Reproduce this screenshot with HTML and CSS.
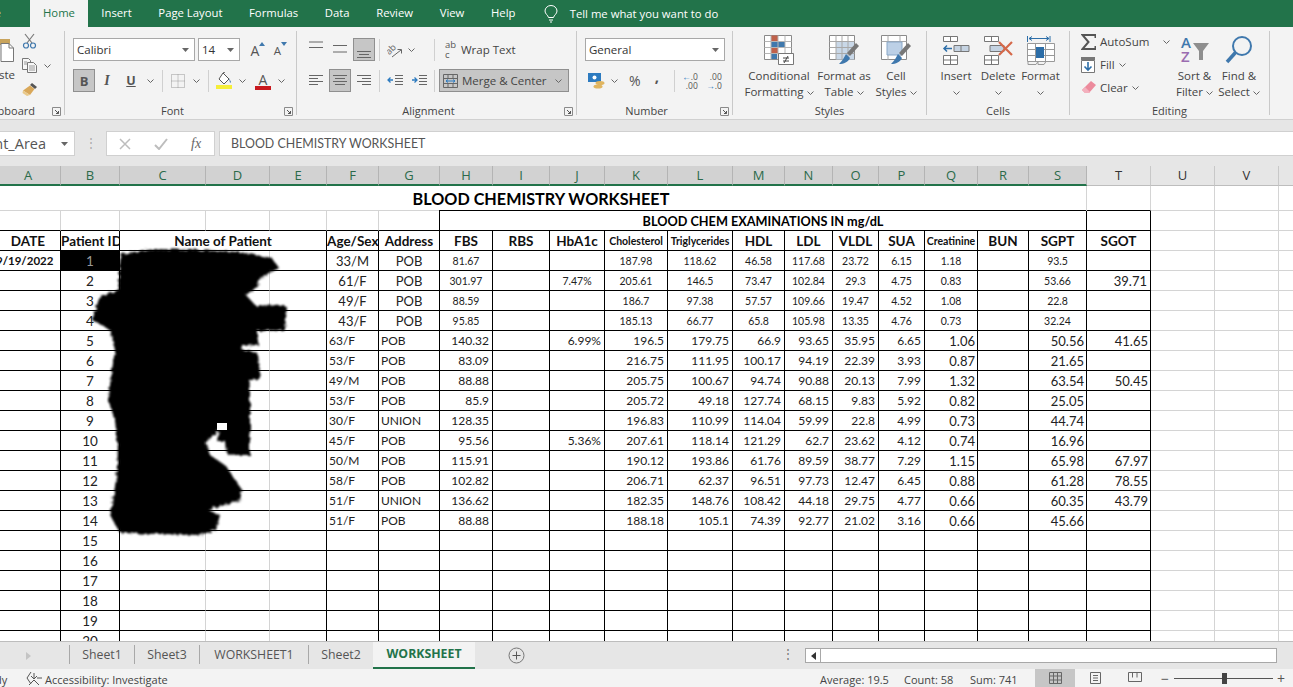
FILE: index.html
```html
<!DOCTYPE html>
<html lang="en">
<head>
<meta charset="utf-8">
<title>BLOOD CHEMISTRY WORKSHEET</title>
<link rel="stylesheet" href="styles.css">
</head>
<body>
<svg class="defs" width="0" height="0">
  <symbol id="chev" viewBox="0 0 7 4"><path d="M.5.5l3 3 3-3" fill="none" stroke="#666"/></symbol>
  <symbol id="tri" viewBox="0 0 7 4"><path d="M0 0h7L3.5 4z" fill="#666"/></symbol>
  <symbol id="launch" viewBox="0 0 9 9"><path d="M.5 8V.5H8.500V8.500H.5" fill="none" stroke="#8a8a8a"/><path d="M3 3l3.500 3.500M6.500 4v2.500H4" fill="none" stroke="#555"/></symbol>
</svg>

<nav class="menu">
  <span class="mtab file">File</span>
  <span class="mtab on">Home</span>
  <span class="mtab">Insert</span>
  <span class="mtab">Page Layout</span>
  <span class="mtab">Formulas</span>
  <span class="mtab">Data</span>
  <span class="mtab">Review</span>
  <span class="mtab">View</span>
  <span class="mtab">Help</span>
  <svg class="bulb" width="14" height="18" viewBox="0 0 14 18"><path d="M4.500 12.500C4 10 1 9 1 6a6 5.500 0 0 1 12 0c0 3-3 4-3.500 6.500zM5 15h4M6 17h2" fill="none" stroke="#fff"/></svg>
  <span class="tell">Tell me what you want to do</span>
</nav>

<section class="ribbon">
  <div class="group g-clip">
    <div class="clipbody">
      <div class="paste">
        <svg width="15" height="27" viewBox="0 0 15 27"><path d="M-6 3h16v6H-6z" fill="#c9a45c"/><path d="M1 7.500h8l4.500 4.500v13.500H1z" fill="#fff" stroke="#777"/><path d="M9 7.500V12h4.500" fill="none" stroke="#777"/></svg>
        <span class="pastetext">Paste</span>
      </div>
      <div class="clipstack">
        <svg width="15" height="16" viewBox="0 0 15 16"><path d="M3 1l7 9M12 1L5 10" stroke="#7a7a7a" fill="none" stroke-width="1.200"/><circle cx="4" cy="12.500" r="2.500" fill="none" stroke="#3f78ad" stroke-width="1.200"/><circle cx="11" cy="12.500" r="2.500" fill="none" stroke="#3f78ad" stroke-width="1.200"/></svg>
        <div class="copyrow">
          <svg width="15" height="15" viewBox="0 0 15 15"><path d="M.5.500h6l2 2v9H.5z" fill="#f7f7f7" stroke="#777"/><path d="M5.500 4.500h6l3 3v7h-9z" fill="#f7f7f7" stroke="#777"/><path d="M7 8h6M7 10h6M7 12h6M2 4h3M2 6h3" stroke="#999"/></svg>
          <svg class="chev c-copy"><use href="#chev"/></svg>
        </div>
        <svg width="16" height="15" viewBox="0 0 16 15"><path d="M10 1l5 4-2 2-5-4z" fill="#555"/><path d="M8 3.500l4.500 3.500L8 13 1 8.500z" fill="#d9a85a"/><path d="M1 8.500L8 13 5 14 .5 11z" fill="#e9c98a"/></svg>
      </div>
    </div>
    <div class="glabel"><span class="gname clipname">Clipboard</span><svg class="launch"><use href="#launch"/></svg></div>
  </div>

  <div class="group g-font">
    <div class="rows">
      <div class="row r1">
        <div class="field ml8 w122"><span>Calibri</span><svg class="chev tri"><use href="#tri"/></svg></div>
        <div class="field ml3 w42"><span>14</span><svg class="chev tri"><use href="#tri"/></svg></div>
        <div class="tb ml8 w20 growa"><span class="a-big">A</span><svg width="6" height="4" viewBox="0 0 6 4"><path d="M0 4l3-4 3 4z" fill="#3f78ad"/></svg></div>
        <div class="tb ml5 w15 growa"><span class="a-small">A</span><svg width="6" height="4" viewBox="0 0 6 4"><path d="M0 0l3 4 3-4z" fill="#3f78ad"/></svg></div>
      </div>
      <div class="row r2">
        <div class="tb w22 active bold ml8">B</div>
        <div class="tb w24 ital">I</div>
        <div class="tb w24 und">U</div>
        <div class="tb w14"><svg class="chev"><use href="#chev"/></svg></div>
        <i class="sep ml5"></i>
        <div class="tb w29"><svg width="14" height="14" viewBox="0 0 14 14"><path d="M.5.500h13v13H.5zM7 .5v13M.5 7h13" fill="none" stroke="#999" stroke-dasharray="1 1"/></svg></div>
        <div class="tb w8"><svg class="chev"><use href="#chev"/></svg></div>
        <i class="sep ml8"></i>
        <div class="tb w30"><svg width="17" height="17" viewBox="0 0 17 17"><path d="M7 1l6 6-5 5-5-5z" fill="#fff" stroke="#555"/><path d="M13 6l2 4-1 1z" fill="#3f78ad"/><path d="M7 1l2-1" stroke="#555"/><path d="M0 13h16v4H0z" fill="#f5ee3a"/></svg></div>
        <div class="tb w6"><svg class="chev"><use href="#chev"/></svg></div>
        <div class="tb ml4 w28 fcolor"><span>A</span><i></i></div>
        <div class="tb w8"><svg class="chev"><use href="#chev"/></svg></div>
      </div>
    </div>
    <div class="glabel"><span class="gname">Font</span><svg class="launch"><use href="#launch"/></svg></div>
  </div>

  <div class="group g-align">
    <div class="rows">
      <div class="row r1">
        <div class="tb ml12 w14"><svg width="14" height="20" viewBox="0 0 14 20"><path d="M0 2h14M0 7.500h14" stroke="#666"/></svg></div>
        <div class="tb ml10 w14"><svg width="14" height="20" viewBox="0 0 14 20"><path d="M0 5h14M0 11.500h14" stroke="#666" transform="translate(0 .5)"/></svg></div>
        <div class="tb ml6 w22 active"><svg width="14" height="20" viewBox="0 0 14 20"><path d="M0 11.500h14M2 14.500h10M0 17.500h14" stroke="#666"/></svg></div>
        <i class="sep ml4"></i>
        <div class="tb ml7 w16"><svg width="16" height="16" viewBox="0 0 16 16"><text x="0" y="10" class="orient" transform="rotate(-45 5 9)">ab</text><path d="M5 15l9-7M10.500 7.500H14.500V11.500" stroke="#666" fill="none"/></svg></div>
        <div class="tb w16"><svg class="chev"><use href="#chev"/></svg></div>
        <i class="sep ml15"></i>
        <div class="tb ml9 w13"><span class="abc">ab<br>c</span></div>
        <span class="btext ml4">Wrap Text</span>
      </div>
      <div class="row r2">
        <div class="tb ml12 w14"><svg width="14" height="12" viewBox="0 0 14 12"><path d="M0 .5h14M0 3.500h9M0 6.500h14M0 9.500h9" stroke="#666"/></svg></div>
        <div class="tb ml6 w22 active"><svg width="14" height="12" viewBox="0 0 14 12"><path d="M0 .5h14M2 3.500h10M0 6.500h14M2 9.500h10" stroke="#666"/></svg></div>
        <div class="tb ml6 w14"><svg width="14" height="12" viewBox="0 0 14 12"><path d="M0 .5h14M5 3.500h9M0 6.500h14M5 9.500h9" stroke="#666"/></svg></div>
        <i class="sep ml8"></i>
        <div class="tb ml7 w16"><svg width="16" height="12" viewBox="0 0 16 12"><path d="M8 .5h8M8 3.500h8M8 6.500h8M8 9.500h8" stroke="#666"/><path d="M6 5H1M3.500 2.500L1 5l2.500 2.500" fill="none" stroke="#2d7bc0" stroke-width="1.300"/></svg></div>
        <div class="tb ml8 w16"><svg width="16" height="12" viewBox="0 0 16 12"><path d="M8 .5h8M8 3.500h8M8 6.500h8M8 9.500h8" stroke="#666"/><path d="M1 5h5M3.500 2.500L6 5 3.500 7.500" fill="none" stroke="#2d7bc0" stroke-width="1.300"/></svg></div>
        <i class="sep ml7"></i>
        <div class="merge ml4 active">
          <svg width="15" height="14" viewBox="0 0 15 14"><path d="M.5.500h14v13H.5zM.5 4.500h14M.5 9.500h14M5 .5v4M10 .5v4M5 9.500v4M10 9.500v4" fill="none" stroke="#666"/><path d="M3 7h9M5 5.500L3 7l2 1.500M10 5.500L12 7l-2 1.500" fill="none" stroke="#2d7bc0"/></svg>
          <span class="btext">Merge &amp; Center</span>
          <svg class="chev"><use href="#chev"/></svg>
        </div>
      </div>
    </div>
    <div class="glabel"><span class="gname">Alignment</span><svg class="launch"><use href="#launch"/></svg></div>
  </div>

  <div class="group g-num">
    <div class="rows">
      <div class="row r1">
        <div class="field ml8 w140"><span>General</span><svg class="chev tri"><use href="#tri"/></svg></div>
      </div>
      <div class="row r2">
        <div class="tb ml11 w17"><svg width="17" height="16" viewBox="0 0 17 16"><path d="M0 0h13v9H0z" fill="#2d7bc0"/><circle cx="6.500" cy="4.500" r="2" fill="#fff"/><ellipse cx="12" cy="10" rx="4.500" ry="2" fill="#e0b560"/><ellipse cx="10" cy="13.500" rx="4.500" ry="2" fill="#e0b560"/></svg></div>
        <div class="tb w18"><svg class="chev"><use href="#chev"/></svg></div>
        <span class="pct ml6">%</span>
        <span class="comma ml10">,</span>
        <i class="sep ml12"></i>
        <div class="tb ml7 w16 dec"><span><b class="decarrow">←</b>.0<br>.00</span></div>
        <div class="tb ml8 w16 dec"><span>.00<br><b class="decarrow">→</b>.0</span></div>
      </div>
    </div>
    <div class="glabel"><span class="gname">Number</span><svg class="launch"><use href="#launch"/></svg></div>
  </div>

  <div class="group g-styles">
    <div class="bigrow">
      <div class="big ml13 w66">
        <svg width="30" height="30" viewBox="0 0 30 30"><path d="M.5.500h27v24H.5z" fill="#fff" stroke="#8a8a8a"/><path d="M7 .5h7v6H7zM7 12h7v6H7z" fill="#c0614a"/><path d="M7 7h14v5H7zM7 18h6v6H7z" fill="#3f78ad"/><path d="M7 .5v24M14 .5v24M21 .5v24M.5 6.500h27M.5 12.500h27M.5 18.500h27" stroke="#b5b5b5" fill="none"/><path d="M14.500 18.500h15v11h-15z" fill="#fff" stroke="#777"/><path d="M19 23h6M19 26h6M24 21l-4 7" stroke="#444" fill="none"/></svg>
        <span>Conditional<br>Formatting <svg class="chev"><use href="#chev"/></svg></span>
      </div>
      <div class="big ml6 w52">
        <svg width="30" height="30" viewBox="0 0 30 30"><path d="M.5.500h25v24H.5z" fill="#fff" stroke="#8a8a8a"/><path d="M7 6.500h18v18H7z" fill="#c9d8e8"/><path d="M.5 6.500h25M.5 12.500h25M.5 18.500h25M7 .5v24M13 .5v24M19 .5v24" stroke="#a8a8a8" fill="none"/><path d="M27 8l3 3-9 10-3-3z" fill="#777"/><path d="M17 19l4 4c-2 4-6 6-11 6 3-3 5-6 7-10z" fill="#3f78ad"/></svg>
        <span>Format as<br>Table <svg class="chev"><use href="#chev"/></svg></span>
      </div>
      <div class="big ml5 w42">
        <svg width="30" height="30" viewBox="0 0 30 30"><path d="M.5.500h25v24H.5z" fill="#fff" stroke="#8a8a8a"/><path d="M.5 6.500h25M7 .5v6M19 .5v6M7 20v5M19 20v5" stroke="#a8a8a8" fill="none"/><path d="M6 7h15v13H6z" fill="#bcd0e6" stroke="#8aa8c8"/><path d="M27 8l3 3-9 10-3-3z" fill="#777"/><path d="M17 19l4 4c-2 4-6 6-11 6 3-3 5-6 7-10z" fill="#3f78ad"/></svg>
        <span>Cell<br>Styles <svg class="chev"><use href="#chev"/></svg></span>
      </div>
    </div>
    <div class="glabel"><span class="gname full">Styles</span></div>
  </div>

  <div class="group g-cells">
    <div class="bigrow">
      <div class="big ml14 w30">
        <svg width="28" height="30" viewBox="0 0 28 30"><path d="M1.500 1.500h14v5h-14zM8.500 1.500v5M1.500 20.500h14v9h-14zM8.500 20.500v9M1.500 25h14" fill="#fff" stroke="#777"/><path d="M12 10.500h15v6H12zM19 10.500v6" fill="#c5d3e2" stroke="#777"/><path d="M10 13.500H2M5 10.500l-3 3 3 3" fill="none" stroke="#2d6ea8" stroke-width="1.500"/></svg>
        <span>Insert<br><svg class="chev"><use href="#chev"/></svg></span>
      </div>
      <div class="big ml10 w34">
        <svg width="31" height="30" viewBox="0 0 31 30"><path d="M1.500 1.500h14v5h-14zM8.500 1.500v5M1.500 20.500h14v9h-14zM8.500 20.500v9M1.500 25h14" fill="#fff" stroke="#777"/><path d="M7 10.500h14v6H7z" fill="#c5d3e2" stroke="#777"/><path d="M16 7l13 13M29 7L16 20" stroke="#d5694a" stroke-width="2.200"/></svg>
        <span>Delete<br><svg class="chev"><use href="#chev"/></svg></span>
      </div>
      <div class="big ml6 w39">
        <svg width="28" height="30" viewBox="0 0 28 30"><path d="M.5 1v6M23 1v6M2 3.500h20M5 1.500L2 3.500l3 2M19 1.500l3 2-3 2" fill="none" stroke="#2d6ea8"/><path d="M.5 8.500h27v18H.5zM.5 14.500h27M.5 20.500h27M8.500 8.500v18M18.500 8.500v18" fill="#fff" stroke="#999"/><path d="M9 12h8v11H9z" fill="#2d6ea8"/><path d="M1 26.500v3h8l2-3M11 26.500v3h6l2-3" fill="none" stroke="#999"/></svg>
        <span>Format<br><svg class="chev"><use href="#chev"/></svg></span>
      </div>
    </div>
    <div class="glabel"><span class="gname full">Cells</span></div>
  </div>

  <div class="group g-edit">
    <div class="bigrow">
      <div class="editstack ml11">
        <div class="erow r-sum">
          <svg width="15" height="16" viewBox="0 0 15 16"><path d="M14.500 4V1H1.500l6 7-6 7h13v-3" fill="none" stroke="#555" stroke-width="2"/></svg>
          <span class="etext">AutoSum</span><svg class="chev c-sum"><use href="#chev"/></svg>
        </div>
        <div class="erow">
          <svg width="15" height="16" viewBox="0 0 15 16"><path d="M.5 3.500h13v12H.5z" fill="#fff" stroke="#777"/><path d="M0 0h14v3H0z" fill="#777"/><path d="M7 5v8M3.500 9.500L7 13l3.500-3.500" fill="none" stroke="#2d6ea8" stroke-width="1.600"/></svg>
          <span class="etext">Fill</span><svg class="chev c-e"><use href="#chev"/></svg>
        </div>
        <div class="erow">
          <svg width="15" height="14" viewBox="0 0 15 14"><path d="M10 0l5 4-7 8H4L1 9z" fill="#ec8a9c"/><path d="M1 9l3 3h4l1-1-5-5z" fill="#f3b0bd"/></svg>
          <span class="etext">Clear</span><svg class="chev c-e"><use href="#chev"/></svg>
        </div>
      </div>
      <div class="big w35">
        <svg width="30" height="30" viewBox="0 0 30 30"><text x="1" y="13" class="sort-a">A</text><text x="1" y="27" class="sort-z">Z</text><path d="M13 8h16l-6 8v9h-4v-9z" fill="#8e8e8e"/></svg>
        <span>Sort &amp;<br>Filter <svg class="chev"><use href="#chev"/></svg></span>
      </div>
      <div class="big ml8 w38">
        <svg width="30" height="30" viewBox="0 0 30 30"><circle cx="18" cy="11" r="9" fill="none" stroke="#3f78ad" stroke-width="2"/><path d="M11.500 17.500L3 27" stroke="#3f78ad" stroke-width="3.500"/></svg>
        <span>Find &amp;<br>Select <svg class="chev"><use href="#chev"/></svg></span>
      </div>
    </div>
    <div class="glabel"><span class="gname full">Editing</span></div>
  </div>
</section>

<section class="fbar">
  <div class="namebox"><span class="nbtext">Print_Area</span><svg class="chev tri"><use href="#tri"/></svg></div>
  <span class="fdots">⋮</span>
  <div class="fbtns">
    <svg width="12" height="12" viewBox="0 0 12 12"><path d="M1 1l10 10M11 1L1 11" stroke="#bdbdbd" stroke-width="1.500"/></svg>
    <svg width="14" height="12" viewBox="0 0 14 12"><path d="M1 7l4 4 8-10" fill="none" stroke="#bdbdbd" stroke-width="2"/></svg>
    <span class="fx">fx</span>
  </div>
  <div class="finput">BLOOD CHEMISTRY WORKSHEET</div>
</section>

<main class="sheet">
  <table class="grid">
    <colgroup>
      <col class="c65"><col class="c59"><col class="c86"><col class="c64"><col class="c57"><col class="c52"><col class="c61"><col class="c53"><col class="c57"><col class="c55"><col class="c63"><col class="c65"><col class="c52"><col class="c48"><col class="c46"><col class="c46"><col class="c53"><col class="c51"><col class="c58"><col class="c64"><col class="c64"><col class="c64"><col class="c64">
    </colgroup>
    <thead>
      <tr>
        <th>A</th><th>B</th><th>C</th><th>D</th><th>E</th><th>F</th><th>G</th><th>H</th><th>I</th><th>J</th><th>K</th><th>L</th><th>M</th><th>N</th><th>O</th><th>P</th><th>Q</th><th>R</th><th>S</th><th>T</th><th>U</th><th>V</th><th></th>
      </tr>
    </thead>
    <tbody>
      <tr class="title"><td colspan="19">BLOOD CHEMISTRY WORKSHEET</td><td class="topbox"></td><td></td><td></td><td></td></tr>
      <tr class="exam"><td></td><td></td><td></td><td></td><td></td><td></td><td></td><td colspan="12" class="examcell">BLOOD CHEM EXAMINATIONS IN mg/dL</td><td class="black"></td><td></td><td></td><td></td></tr>
      <tr class="hdr"><td>DATE</td><td>Patient ID</td><td colspan="3">Name of Patient</td><td>Age/Sex</td><td>Address</td><td>FBS</td><td>RBS</td><td>HbA1c</td><td class="tiny">Cholesterol</td><td class="tiny">Triglycerides</td><td>HDL</td><td>LDL</td><td>VLDL</td><td>SUA</td><td class="tiny">Creatinine</td><td>BUN</td><td>SGPT</td><td>SGOT</td><td></td><td></td><td></td></tr>
      <tr class="sm"><td class="date">9/19/2022</td><td class="sel">1</td><td></td><td></td><td></td><td>33/M</td><td>POB</td><td>81.67</td><td></td><td></td><td>187.98</td><td>118.62</td><td>46.58</td><td>117.68</td><td>23.72</td><td>6.15</td><td>1.18</td><td></td><td>93.5</td><td></td><td></td><td></td><td></td></tr>
      <tr class="sm"><td></td><td>2</td><td></td><td></td><td></td><td>61/F</td><td>POB</td><td>301.97</td><td></td><td>7.47%</td><td>205.61</td><td>146.5</td><td>73.47</td><td>102.84</td><td>29.3</td><td>4.75</td><td>0.83</td><td></td><td>53.66</td><td>39.71</td><td></td><td></td><td></td></tr>
      <tr class="sm"><td></td><td>3</td><td></td><td></td><td></td><td>49/F</td><td>POB</td><td>88.59</td><td></td><td></td><td>186.7</td><td>97.38</td><td>57.57</td><td>109.66</td><td>19.47</td><td>4.52</td><td>1.08</td><td></td><td>22.8</td><td></td><td></td><td></td><td></td></tr>
      <tr class="sm"><td></td><td>4</td><td></td><td></td><td></td><td>43/F</td><td>POB</td><td>95.85</td><td></td><td></td><td>185.13</td><td>66.77</td><td>65.8</td><td>105.98</td><td>13.35</td><td>4.76</td><td>0.73</td><td></td><td>32.24</td><td></td><td></td><td></td><td></td></tr>
      <tr class="lg"><td></td><td>5</td><td></td><td></td><td></td><td>63/F</td><td>POB</td><td>140.32</td><td></td><td>6.99%</td><td>196.5</td><td>179.75</td><td>66.9</td><td>93.65</td><td>35.95</td><td>6.65</td><td>1.06</td><td></td><td>50.56</td><td>41.65</td><td></td><td></td><td></td></tr>
      <tr class="lg"><td></td><td>6</td><td></td><td></td><td></td><td>53/F</td><td>POB</td><td>83.09</td><td></td><td></td><td>216.75</td><td>111.95</td><td>100.17</td><td>94.19</td><td>22.39</td><td>3.93</td><td>0.87</td><td></td><td>21.65</td><td></td><td></td><td></td><td></td></tr>
      <tr class="lg"><td></td><td>7</td><td></td><td></td><td></td><td>49/M</td><td>POB</td><td>88.88</td><td></td><td></td><td>205.75</td><td>100.67</td><td>94.74</td><td>90.88</td><td>20.13</td><td>7.99</td><td>1.32</td><td></td><td>63.54</td><td>50.45</td><td></td><td></td><td></td></tr>
      <tr class="lg"><td></td><td>8</td><td></td><td></td><td></td><td>53/F</td><td>POB</td><td>85.9</td><td></td><td></td><td>205.72</td><td>49.18</td><td>127.74</td><td>68.15</td><td>9.83</td><td>5.92</td><td>0.82</td><td></td><td>25.05</td><td></td><td></td><td></td><td></td></tr>
      <tr class="lg"><td></td><td>9</td><td></td><td></td><td></td><td>30/F</td><td>UNION</td><td>128.35</td><td></td><td></td><td>196.83</td><td>110.99</td><td>114.04</td><td>59.99</td><td>22.8</td><td>4.99</td><td>0.73</td><td></td><td>44.74</td><td></td><td></td><td></td><td></td></tr>
      <tr class="lg"><td></td><td>10</td><td></td><td></td><td></td><td>45/F</td><td>POB</td><td>95.56</td><td></td><td>5.36%</td><td>207.61</td><td>118.14</td><td>121.29</td><td>62.7</td><td>23.62</td><td>4.12</td><td>0.74</td><td></td><td>16.96</td><td></td><td></td><td></td><td></td></tr>
      <tr class="lg"><td></td><td>11</td><td></td><td></td><td></td><td>50/M</td><td>POB</td><td>115.91</td><td></td><td></td><td>190.12</td><td>193.86</td><td>61.76</td><td>89.59</td><td>38.77</td><td>7.29</td><td>1.15</td><td></td><td>65.98</td><td>67.97</td><td></td><td></td><td></td></tr>
      <tr class="lg"><td></td><td>12</td><td></td><td></td><td></td><td>58/F</td><td>POB</td><td>102.82</td><td></td><td></td><td>206.71</td><td>62.37</td><td>96.51</td><td>97.73</td><td>12.47</td><td>6.45</td><td>0.88</td><td></td><td>61.28</td><td>78.55</td><td></td><td></td><td></td></tr>
      <tr class="lg"><td></td><td>13</td><td></td><td></td><td></td><td>51/F</td><td>UNION</td><td>136.62</td><td></td><td></td><td>182.35</td><td>148.76</td><td>108.42</td><td>44.18</td><td>29.75</td><td>4.77</td><td>0.66</td><td></td><td>60.35</td><td>43.79</td><td></td><td></td><td></td></tr>
      <tr class="lg"><td></td><td>14</td><td></td><td></td><td></td><td>51/F</td><td>POB</td><td>88.88</td><td></td><td></td><td>188.18</td><td>105.1</td><td>74.39</td><td>92.77</td><td>21.02</td><td>3.16</td><td>0.66</td><td></td><td>45.66</td><td></td><td></td><td></td><td></td></tr>
      <tr class="lg"><td></td><td>15</td><td></td><td></td><td></td><td></td><td></td><td></td><td></td><td></td><td></td><td></td><td></td><td></td><td></td><td></td><td></td><td></td><td></td><td></td><td></td><td></td><td></td></tr>
      <tr class="lg"><td></td><td>16</td><td></td><td></td><td></td><td></td><td></td><td></td><td></td><td></td><td></td><td></td><td></td><td></td><td></td><td></td><td></td><td></td><td></td><td></td><td></td><td></td><td></td></tr>
      <tr class="lg"><td></td><td>17</td><td></td><td></td><td></td><td></td><td></td><td></td><td></td><td></td><td></td><td></td><td></td><td></td><td></td><td></td><td></td><td></td><td></td><td></td><td></td><td></td><td></td></tr>
      <tr class="lg"><td></td><td>18</td><td></td><td></td><td></td><td></td><td></td><td></td><td></td><td></td><td></td><td></td><td></td><td></td><td></td><td></td><td></td><td></td><td></td><td></td><td></td><td></td><td></td></tr>
      <tr class="lg"><td></td><td>19</td><td></td><td></td><td></td><td></td><td></td><td></td><td></td><td></td><td></td><td></td><td></td><td></td><td></td><td></td><td></td><td></td><td></td><td></td><td></td><td></td><td></td></tr>
      <tr class="lg"><td></td><td>20</td><td></td><td></td><td></td><td></td><td></td><td></td><td></td><td></td><td></td><td></td><td></td><td></td><td></td><td></td><td></td><td></td><td></td><td></td><td></td><td></td><td></td></tr>
    </tbody>
  </table>
  <svg class="redact" width="210" height="300" viewBox="88 245 210 300">
    <defs>
      <filter id="rough" x="-5%" y="-5%" width="110%" height="110%">
        <feTurbulence type="fractalNoise" baseFrequency="0.25" numOctaves="2" seed="4"/>
        <feDisplacementMap in="SourceGraphic" scale="5"/>
        <feGaussianBlur stdDeviation="0.8"/>
      </filter>
    </defs>
    <path filter="url(#rough)" fill="#000" d="M122 254L150 249 195 250 240 252 272 258 279 268 260 278 258 286 246 295 255 305 287 306 285 330 258 331 258 345 242 346 241 349 258 353 260 378 250 381 250 455 227 455 226 441 217 441 219 430 206 443 210 455 226 466 242 490 240 500 208 510 220 515 216 530 200 535 120 533 110 515 116 480 118 450 115 420 108 400 112 370 115 350 110 330 92 320 100 296 118 290 120 262z"/>
    <path fill="#fff" d="M217 423h10v7h-10z"/>
  </svg>
</main>

<section class="tabs">
  <svg class="tabarrow" width="5" height="8" viewBox="0 0 5 8"><path d="M0 0l5 4-5 4z" fill="#c4c4c4"/></svg>
  <div class="sheettabs">
    <span class="stab w65">Sheet1</span>
    <span class="stab w65">Sheet3</span>
    <span class="stab w109">WORKSHEET1</span>
    <span class="stab w65">Sheet2</span>
    <span class="stab cur">WORKSHEET</span>
  </div>
  <svg class="plus" width="17" height="17" viewBox="0 0 17 17"><circle cx="8.500" cy="8.500" r="7.500" fill="none" stroke="#777"/><path d="M4.500 8.500h8M8.500 4.500v8" stroke="#555"/></svg>
  <span class="tdots">⋮</span>
  <div class="hscroll"><span class="hbtn"><svg width="5" height="8" viewBox="0 0 5 8"><path d="M5 0L0 4l5 4z" fill="#333"/></svg></span></div>
</section>

<footer class="status">
  <span class="ready">Ready</span>
  <svg class="acc" width="16" height="15" viewBox="0 0 16 15"><path d="M5 1L1 7l4 6M8 2v6M5 5l3 3 3-3M3 14l5-5 5 5M11 7h5" fill="none" stroke="#555"/></svg>
  <span class="accname">Accessibility: Investigate</span>
  <span class="stat s-avg">Average: 19.5</span>
  <span class="stat s-cnt">Count: 58</span>
  <span class="stat s-sum">Sum: 741</span>
  <div class="viewbtn vcur"><svg width="13" height="12" viewBox="0 0 13 12"><path d="M.5.500h12v11H.5zM.5 4h12M.5 8h12M4.500.5v11M8.500.5v11" fill="none" stroke="#666"/></svg></div>
  <div class="viewbtn"><svg width="13" height="12" viewBox="0 0 13 12"><path d="M1.500.5h10v11h-10zM4 3.500h5M4 6h5M4 8.500h5" fill="none" stroke="#666"/></svg></div>
  <div class="viewbtn"><svg width="14" height="12" viewBox="0 0 14 12"><path d="M.5.500h13v9H.5zM4.500.5v5M9 .5v5" fill="none" stroke="#666"/></svg></div>
  <span class="zoomminus">−</span>
  <div class="slider"><i></i></div>
  <span class="zoomplus">+</span>
</footer>
</body>
</html>
```

FILE: styles.css
```css
* { box-sizing: border-box; }
html, body { margin: 0; padding: 0; }
body {
  width: 1293px;
  height: 687px;
  overflow: hidden;
  background: #fff;
  font-family: "Open Sans", "Noto Sans", sans-serif;
  font-size: 12px;
  color: #444;
  display: flex;
  flex-direction: column;
}
.defs { position: absolute; }

/* Title menu */
.menu {
  display: flex;
  align-items: center;
  height: 27px;
  flex: none;
  background: #22734a;
  color: #fff;
  font-size: 11.300px;
}
.mtab { padding: 0 13.3px; height: 27px; line-height: 25px; }
.mtab.file { width: 30px; padding: 0; display: flex; justify-content: flex-start; text-indent: -17px; overflow: hidden; }
.mtab.on { background: #f3f3f3; color: #22734a; padding: 0 13px; width: 58px; }
.bulb { margin-left: 15px; }
.tell { margin-left: 12px; line-height: 25px; }

/* Ribbon */
.ribbon {
  display: flex;
  height: 93px;
  flex: none;
  padding: 4px 0;
  background: #f3f3f3;
  border-bottom: 1px solid #d0d0d0;
  font-size: 11.500px;
}
.group {
  display: flex;
  flex-direction: column;
  justify-content: space-between;
  border-right: 1px solid #c9c9c9;
  flex: none;
  height: 84px;
}
.g-clip { width: 65px; }
.g-font { width: 232px; }
.g-align { width: 280px; }
.g-num { width: 156px; }
.g-styles { width: 194px; }
.g-cells { width: 143px; }
.g-edit { width: 200px; }

.glabel { display: flex; align-items: center; height: 14px; margin-bottom: -3px; font-size: 11px; color: #444; }
.gname { flex: 1; text-align: center; line-height: 14px; }
.launch { width: 9px; height: 9px; flex: none; margin: 0 3px 0 4px; }
.clipname { padding-right: 13px; white-space: nowrap; overflow: hidden; display: flex; justify-content: flex-end; }

.rows { display: flex; flex-direction: column; gap: 8px; padding-top: 7px; }
.row { display: flex; align-items: center; height: 23px; }
.tb { display: flex; align-items: center; justify-content: center; height: 23px; flex: none; }
.field {
  display: flex; align-items: center; justify-content: space-between;
  height: 23px; padding: 0 5px 0 3px; flex: none;
  background: #fff; border: 1px solid #a8a8a8; color: #333;
}
.active { background: #c6c6c6; border: 1px solid #8f8f8f; }
.sep { display: block; width: 1px; height: 22px; background: #d0d0d0; flex: none; }
.bold { font-weight: 700; font-size: 13px; color: #555; }
.ital { font-style: italic; font-family: "Liberation Serif", serif; font-size: 14px; font-weight: 700; color: #555; }
.und { text-decoration: underline; font-weight: 700; font-size: 12.500px; color: #555; }
.growa { align-items: flex-start; padding-top: 4px; color: #555; }
.a-big { font-size: 14px; line-height: 17px; }
.a-small { font-size: 11.500px; line-height: 18px; }
.fcolor { flex-direction: column; padding-top: 2px; }
.fcolor span { font-size: 14px; line-height: 13px; color: #555; }
.fcolor i { display: block; width: 16px; height: 4px; background: #c8181e; }
.btext { white-space: nowrap; color: #444; }
.abc { font-size: 9.500px; line-height: 10px; color: #555; }
.orient { font-size: 9px; fill: #666; }
.merge { display: flex; align-items: center; width: 130px; height: 23px; padding: 0 6px 0 3px; flex: none; }
.merge .btext { margin-left: 4px; flex: 1; }
.pct { font-size: 14px; width: 13px; color: #555; flex: none; line-height: 14px; }
.comma { font-size: 15px; font-weight: 700; width: 10px; text-align: center; flex: none; color: #555; line-height: 15px; margin-top: -9px; }
.dec { font-size: 8.500px; line-height: 9px; color: #555; text-align: right; }
.decarrow { color: #2d7bc0; font-weight: 400; }

.bigrow { display: flex; height: 69px; }
.big { display: flex; flex-direction: column; align-items: center; flex: none; padding-top: 4px; text-align: center; color: #444; }
.big span { display: block; margin-top: 3px; line-height: 16px; white-space: nowrap; }
.chev { width: 7px; height: 4px; flex: none; vertical-align: middle; }
.editstack { display: flex; flex-direction: column; width: 96px; flex: none; margin-top: -1px; }
.erow { display: flex; align-items: center; height: 23px; }
.etext { margin-left: 4px; white-space: nowrap; }
.c-sum { margin-left: 14px; }
.c-e { margin-left: 4px; }
.sort-a { font-size: 15px; font-weight: 600; fill: #3f78ad; font-family: "Open Sans", sans-serif; }
.sort-z { font-size: 15px; font-weight: 600; fill: #9a6cb0; font-family: "Open Sans", sans-serif; }
.full { flex: 1; }

.clipbody { display: flex; }
.paste { width: 15px; flex: none; display: flex; flex-direction: column; align-items: flex-end; padding-top: 5px; overflow: hidden; height: 69px; }
.pastetext { margin-top: 4px; line-height: 16px; white-space: nowrap; }
.paste svg { flex: none; align-self: flex-start; }
.clipstack { display: flex; flex-direction: column; gap: 9px; margin-left: 7px; padding-top: 2px; }
.copyrow { display: flex; align-items: center; }
.c-copy { margin-left: 7px; }

/* margins & widths */
.ml3 { margin-left: 3px; } .ml4 { margin-left: 4px; } .ml5 { margin-left: 5px; } .ml6 { margin-left: 6px; }
.ml7 { margin-left: 7px; } .ml8 { margin-left: 8px; } .ml9 { margin-left: 9px; } .ml10 { margin-left: 10px; }
.ml11 { margin-left: 11px; } .ml12 { margin-left: 12px; } .ml13 { margin-left: 13px; } .ml14 { margin-left: 14px; } .ml15 { margin-left: 15px; }
.w6 { width: 6px; } .w8 { width: 8px; } .w13 { width: 13px; } .w14 { width: 14px; } .w15 { width: 15px; } .w16 { width: 16px; }
.w17 { width: 17px; } .w18 { width: 18px; } .w20 { width: 20px; } .w22 { width: 22px; } .w24 { width: 24px; } .w28 { width: 28px; }
.w29 { width: 29px; } .w30 { width: 30px; } .w34 { width: 34px; } .w35 { width: 35px; } .w38 { width: 38px; } .w39 { width: 39px; }
.w42 { width: 42px; } .w52 { width: 52px; } .w65 { width: 65px; } .w66 { width: 66px; } .w109 { width: 109px; } .w122 { width: 122px; } .w140 { width: 140px; }

/* Formula bar */
.fbar {
  display: flex; align-items: stretch;
  height: 46px; flex: none;
  padding: 11px 0 10px;
  background: #e6e6e6;
}
.namebox {
  width: 75px; flex: none; display: flex; align-items: center; justify-content: space-between;
  background: #fff; border: 1px solid #d0d0d0; border-left: 0; padding-right: 6px; overflow: hidden;
  font-size: 14.500px; color: #555;
}
.nbtext { margin-left: -24px; white-space: nowrap; }
.fdots { width: 31px; flex: none; text-align: center; color: #aaa; line-height: 24px; }
.fbtns {
  width: 109px; flex: none; display: flex; align-items: center; gap: 23px; padding-left: 12px;
  background: #fff; border: 1px solid #d0d0d0;
}
.fx { font-family: "Liberation Serif", serif; font-style: italic; font-size: 14px; color: #666; }
.finput {
  flex: 1; margin-left: 4px; background: #fff; border: 1px solid #d0d0d0; border-right: 0;
  padding-left: 11px; line-height: 23px; font-family: "Lato", sans-serif; font-size: 12.400px; color: #555;
}

/* Sheet */
.sheet { position: relative; height: 475px; flex: none; overflow: hidden; background: #fff; }
.grid {
  table-layout: fixed; border-collapse: separate; border-spacing: 0;
  width: 1346px; margin-left: -4px;
  font-family: "Lato", sans-serif; font-size: 12px; color: #222;
}
.c46 { width: 46px; } .c48 { width: 48px; } .c51 { width: 51px; } .c52 { width: 52px; } .c53 { width: 53px; }
.c55 { width: 55px; } .c57 { width: 57px; } .c58 { width: 58px; } .c59 { width: 59px; } .c61 { width: 61px; }
.c63 { width: 63px; } .c64 { width: 64px; } .c65 { width: 65px; } .c86 { width: 86px; }

.grid th {
  height: 20px; padding: 0; font-weight: 400; font-size: 13px; line-height: 17px; text-align: center;
  background: #d2d2d2; color: #2b6a4a;
  border-right: 1px solid #b4b4b4; border-bottom: 2px solid #22734a;
  font-family: "Open Sans", sans-serif;
}
.grid th:nth-child(n+20) { background: #e6e6e6; color: #333; border-right-color: #c8c8c8; border-bottom: 1px solid #bdbdbd; }

.grid td {
  height: 20px; padding: 1px 0 0; overflow: hidden; white-space: nowrap; text-align: center; line-height: 18px;
  border-right: 1px solid #000; border-bottom: 1px solid #000;
}
.grid td:nth-child(n+21) { border-right-color: #d4d4d4; border-bottom-color: #d4d4d4; }

.title td { height: 25px; border-right-color: #d4d4d4; border-bottom-color: #d4d4d4; }
.title td:first-child {
  border-bottom: 0; padding: 0; font-weight: 700; font-size: 16.200px; color: #000; line-height: 25px;
  background: linear-gradient(to right, #d4d4d4 443px, #000 443px) bottom / 100% 1px no-repeat;
}
.title .topbox { border-bottom-color: #000; }

.exam td:nth-child(-n+6) { border-right-color: #d4d4d4; }
.exam td:nth-child(7) { border-right-color: #000; }
.exam .examcell { font-weight: 700; font-size: 12.700px; color: #000; }
.exam td:nth-child(n+10) { border-right-color: #d4d4d4; border-bottom-color: #d4d4d4; }

.hdr td { font-weight: 700; font-size: 13.500px; color: #111; }
.hdr td.tiny { font-size: 10.500px; }
.hdr td:nth-child(n+19) { border-right-color: #d4d4d4; border-bottom-color: #d4d4d4; }

.sm td { font-size: 10.500px; }
.sm td:nth-child(2) { font-size: 13.500px; }
.sm td:nth-child(6), .sm td:nth-child(7) { font-size: 13px; }
.sm td:nth-child(20) { font-size: 13px; text-align: right; padding-right: 3px; }
.sm td.date { font-weight: 700; font-size: 11.500px; text-align: right; padding-right: 11px; color: #111; }
.sm td.sel { background: #000; color: #999; }

/* C and D share one merged-looking span with gray inner lines */
.sm td:nth-child(3), .sm td:nth-child(4),
.lg td:nth-child(3), .lg td:nth-child(4) { border-right-color: #d4d4d4; }

.lg td { text-align: right; padding-right: 3px; font-size: 12px; }
.lg td:nth-child(2) { text-align: center; padding-right: 0; font-size: 13.500px; }
.lg td:nth-child(6), .lg td:nth-child(7) { text-align: left; padding-left: 2px; padding-right: 0; font-size: 12px; }
.lg td:nth-child(17), .lg td:nth-child(19), .lg td:nth-child(20) { font-size: 13px; padding-right: 2px; }

.redact { position: absolute; left: 88px; top: 79px; }

/* Sheet tabs */
.tabs {
  display: flex; align-items: flex-start; height: 28px; flex: none;
  background: #e6e6e6; border-top: 1px solid #bdbdbd; font-size: 12.300px;
}
.tabarrow { margin: 10px 0 0 26px; flex: none; }
.sheettabs { display: flex; margin-left: 38px; height: 27px; flex: none; }
.stab {
  text-align: center; line-height: 19px; height: 19px; margin-top: 3px; border-left: 1px solid #a8a8a8; color: #555; white-space: nowrap; flex: none;
}
.stab.cur {
  height: 27px; margin-top: 0; line-height: 24px; width: 102px;
  background: #f3f3f3; border-left: 0; border-bottom: 2px solid #22734a; color: #22734a; font-weight: 700;
}
.plus { margin: 5px 0 0 33px; flex: none; }
.tdots { margin-left: 257px; line-height: 24px; color: #777; width: 8px; flex: none; }
.hscroll { margin: 6px 0 0 15px; width: 472px; height: 15px; background: #fff; border: 1px solid #a8a8a8; flex: none; }
.hbtn { display: flex; align-items: center; justify-content: center; width: 15px; height: 13px; border-right: 1px solid #a8a8a8; }

/* Status bar */
.status {
  display: flex; align-items: center; height: 18px; flex: none;
  background: #f3f3f3; font-size: 11px; color: #444;
}
.ready { width: 26px; flex: none; text-indent: -24px; overflow: hidden; white-space: nowrap; padding-top: 2px; }
.acc { flex: none; }
.accname { margin-left: 3px; width: 775px; flex: none; white-space: nowrap; padding-top: 2px; }
.stat { flex: none; white-space: nowrap; padding-top: 2px; }
.s-avg { width: 84px; }
.s-cnt { width: 66px; }
.s-sum { width: 65px; }
.viewbtn { display: flex; align-items: center; justify-content: center; width: 40px; height: 18px; flex: none; }
.vcur { background: #c6c6c6; }
.zoomminus { margin-left: 6px; font-size: 14px; width: 13px; flex: none; color: #555; }
.slider { position: relative; width: 99px; height: 1px; background: #555; flex: none; }
.slider i { position: absolute; left: 48px; top: -5px; width: 5px; height: 11px; background: #444; }
.zoomplus { margin-left: 4px; font-size: 14px; color: #555; flex: none; }
```
